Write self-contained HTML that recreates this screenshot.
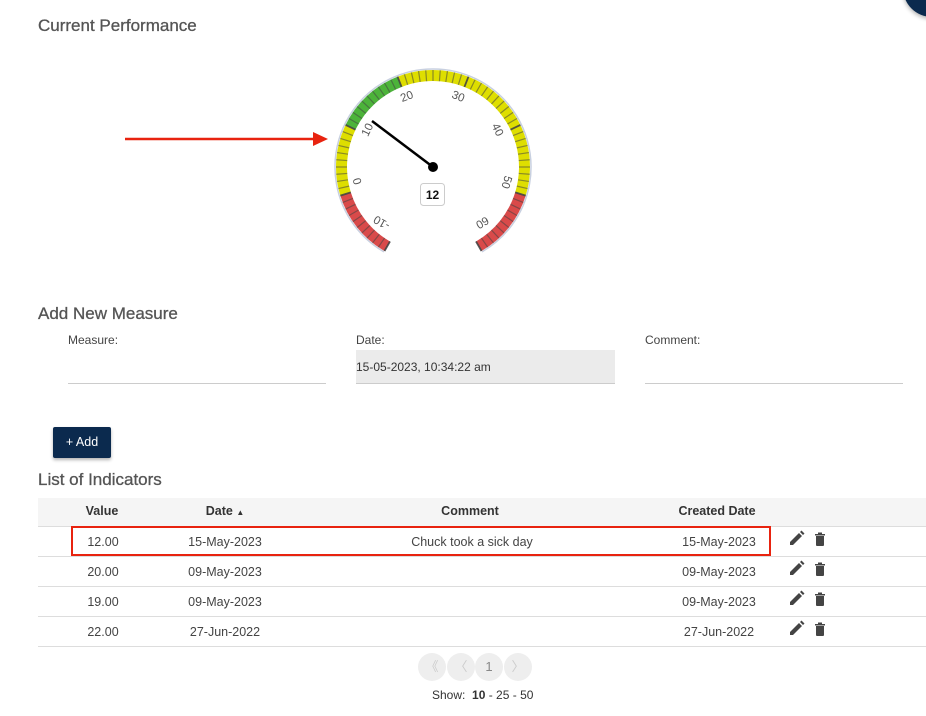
<!DOCTYPE html>
<html><head><meta charset="utf-8">
<style>
*{margin:0;padding:0;box-sizing:border-box}
body{width:926px;height:716px;background:#fff;font-family:"Liberation Sans",sans-serif;color:#333;position:relative;overflow:hidden}
.abs{position:absolute}
h2{position:absolute;font-size:17px;font-weight:normal;color:#555;-webkit-text-stroke:0.3px #555}
.lbl{position:absolute;font-size:12px;color:#444}
.inp{position:absolute;height:34px;border-bottom:1px solid #ccc}
.th,.td{position:absolute;font-size:12.5px;transform:translateX(-50%);white-space:nowrap}
.th{color:#333;font-weight:bold}
.td{color:#444}
.line{position:absolute;left:38px;width:888px;height:1px;background:#ddd}
</style></head><body>
<div class="abs" style="left:903px;top:-41px;width:58px;height:58px;border-radius:50%;background:#0b2a4e;box-shadow:0 2px 4px rgba(0,0,0,.3)"></div>
<h2 style="left:38px;top:16px">Current Performance</h2>

<svg class="abs" style="left:0;top:0" width="926" height="290">
  <line x1="125" y1="139" x2="316" y2="139" stroke="#e8230f" stroke-width="2.5"/>
  <polygon points="328,139 313,132 313,146" fill="#e8230f"/>
  <g id="g"></g>
  <g font-size="11.5" fill="#555" text-anchor="middle" dominant-baseline="middle" font-family="Liberation Sans,sans-serif">
    <text transform="translate(382,222) rotate(210)">-10</text>
    <text transform="translate(358,181) rotate(253)">0</text>
    <text transform="translate(368,130) rotate(296)">10</text>
    <text transform="translate(407,97) rotate(339)">20</text>
    <text transform="translate(458,97) rotate(21)">30</text>
    <text transform="translate(497,130) rotate(64)">40</text>
    <text transform="translate(506,182) rotate(107)">50</text>
    <text transform="translate(482,222) rotate(150)">60</text>
  </g>
  <line x1="433" y1="167" x2="372" y2="121" stroke="#000" stroke-width="2.5"/>
  <circle cx="433" cy="167" r="5" fill="#000"/>
  <rect x="420.5" y="183.5" width="24" height="22" rx="3" fill="#fff" stroke="#ccc"/>
  <text x="432.5" y="199" font-size="12" font-weight="bold" text-anchor="middle" fill="#111" font-family="Liberation Sans,sans-serif">12</text>
</svg>
<script>
(function(){
var g=document.getElementById('g'),cx=433,cy=167,R=97,r=86,s='';
function pt(a,rad){a=a*Math.PI/180;return [cx+rad*Math.cos(a),cy+rad*Math.sin(a)];}
function ang(v){return 120+(v+10)*300/70;}
function seg(v1,v2,c){var a1=ang(v1),a2=ang(v2),p1=pt(a1,R),p2=pt(a2,R),p3=pt(a2,r),p4=pt(a1,r),l=(a2-a1)>180?1:0;
s+='<path d="M'+p1+' A'+R+' '+R+' 0 '+l+' 1 '+p2+' L'+p3+' A'+r+' '+r+' 0 '+l+' 0 '+p4+'Z" fill="'+c+'"/>';}
s+='<path d="M'+pt(120,R+1)+' A'+(R+1)+' '+(R+1)+' 0 1 1 '+pt(60,R+1)+'" fill="none" stroke="#c8d0e0" stroke-width="1.5"/>';
seg(-10,0,'#d94a4a');seg(0,10,'#dede00');seg(10,20,'#4cb33a');seg(20,50,'#dede00');seg(50,60,'#d94a4a');
for(var v=-10;v<=60;v++){var a=ang(v),maj=v%10==0,p=pt(a,R),q=pt(a,r);
s+='<line x1="'+p[0]+'" y1="'+p[1]+'" x2="'+q[0]+'" y2="'+q[1]+'" stroke="#444" stroke-width="'+(maj?1.8:1.2)+'" opacity="'+(maj?0.9:0.55)+'"/>';}
g.innerHTML=s;})();
</script>

<h2 style="left:38px;top:304px">Add New Measure</h2>
<div class="lbl" style="left:68px;top:333px">Measure:</div>
<div class="lbl" style="left:356px;top:333px">Date:</div>
<div class="lbl" style="left:645px;top:333px">Comment:</div>
<div class="inp" style="left:68px;top:350px;width:258px"></div>
<div class="inp" style="left:356px;top:350px;width:259px;background:#ebebeb"></div>
<div class="lbl" style="left:356px;top:360px;color:#333">15-05-2023, 10:34:22 am</div>
<div class="inp" style="left:645px;top:350px;width:258px"></div>

<div class="abs" style="left:53px;top:427px;width:58px;height:31px;background:#0b2a4e;border-radius:2px;box-shadow:0 2px 3px rgba(0,0,0,.3);color:#fff;font-size:12.5px;text-align:center;line-height:31px">+ Add</div>

<h2 style="left:38px;top:470px">List of Indicators</h2>
<div class="abs" style="left:38px;top:498px;width:888px;height:28px;background:#f5f5f5"></div>
<div class="th" style="left:102px;top:504px">Value</div>
<div class="th" style="left:225px;top:504px">Date <span style="font-size:8px">&#9650;</span></div>
<div class="th" style="left:470px;top:504px">Comment</div>
<div class="th" style="left:717px;top:504px">Created Date</div>
<div class="line" style="top:526px"></div>
<div class="line" style="top:556px"></div>
<div class="line" style="top:586px"></div>
<div class="line" style="top:616px"></div>
<div class="line" style="top:646px"></div>

<div class="td" style="left:103px;top:535px">12.00</div><div class="td" style="left:225px;top:535px">15-May-2023</div><div class="td" style="left:472px;top:535px">Chuck took a sick day</div><div class="td" style="left:719px;top:535px">15-May-2023</div>
<div class="td" style="left:103px;top:565px">20.00</div><div class="td" style="left:225px;top:565px">09-May-2023</div><div class="td" style="left:719px;top:565px">09-May-2023</div>
<div class="td" style="left:103px;top:595px">19.00</div><div class="td" style="left:225px;top:595px">09-May-2023</div><div class="td" style="left:719px;top:595px">09-May-2023</div>
<div class="td" style="left:103px;top:625px">22.00</div><div class="td" style="left:225px;top:625px">27-Jun-2022</div><div class="td" style="left:719px;top:625px">27-Jun-2022</div>

<div class="abs" style="left:71px;top:526px;width:700px;height:30px;border:2.5px solid #e8230f"></div>

<svg class="abs" style="left:780px;top:526px" width="60" height="120">
  <defs>
    <g id="ic">
      <path d="M10 19 L10 16 L19 7 L22 10 L13 19 Z M20 6 L21.5 4.5 L24.5 7.5 L23 9 Z" fill="#444"/>
      <path d="M35 8 H45 V9.5 H35 Z M38 6.5 H42 V8 H38 Z M36 10 H44 V19 Q44 20 43 20 H37 Q36 20 36 19 Z" fill="#444"/>
    </g>
  </defs>
  <use href="#ic"/>
  <use href="#ic" y="30"/>
  <use href="#ic" y="60"/>
  <use href="#ic" y="90"/>
</svg>

<div class="abs" style="left:418px;top:653px;width:115px;height:28px">
  <div class="abs" style="left:0;top:0;width:28px;height:28px;border-radius:50%;background:#eee;color:#ccc;font-size:13px;text-align:center;line-height:28px">&#12298;</div>
  <div class="abs" style="left:29px;top:0;width:28px;height:28px;border-radius:50%;background:#eee;color:#ccc;font-size:13px;text-align:center;line-height:28px">&#12296;</div>
  <div class="abs" style="left:57px;top:0;width:28px;height:28px;border-radius:50%;background:#eee;color:#888;font-size:13px;text-align:center;line-height:28px">1</div>
  <div class="abs" style="left:86px;top:0;width:28px;height:28px;border-radius:50%;background:#eee;color:#ccc;font-size:13px;text-align:center;line-height:28px">&#12297;</div>
</div>
<div class="abs" style="left:432px;top:688px;font-size:12px;color:#333">Show:&nbsp; <b>10</b> - 25 - 50</div>
</body></html>
